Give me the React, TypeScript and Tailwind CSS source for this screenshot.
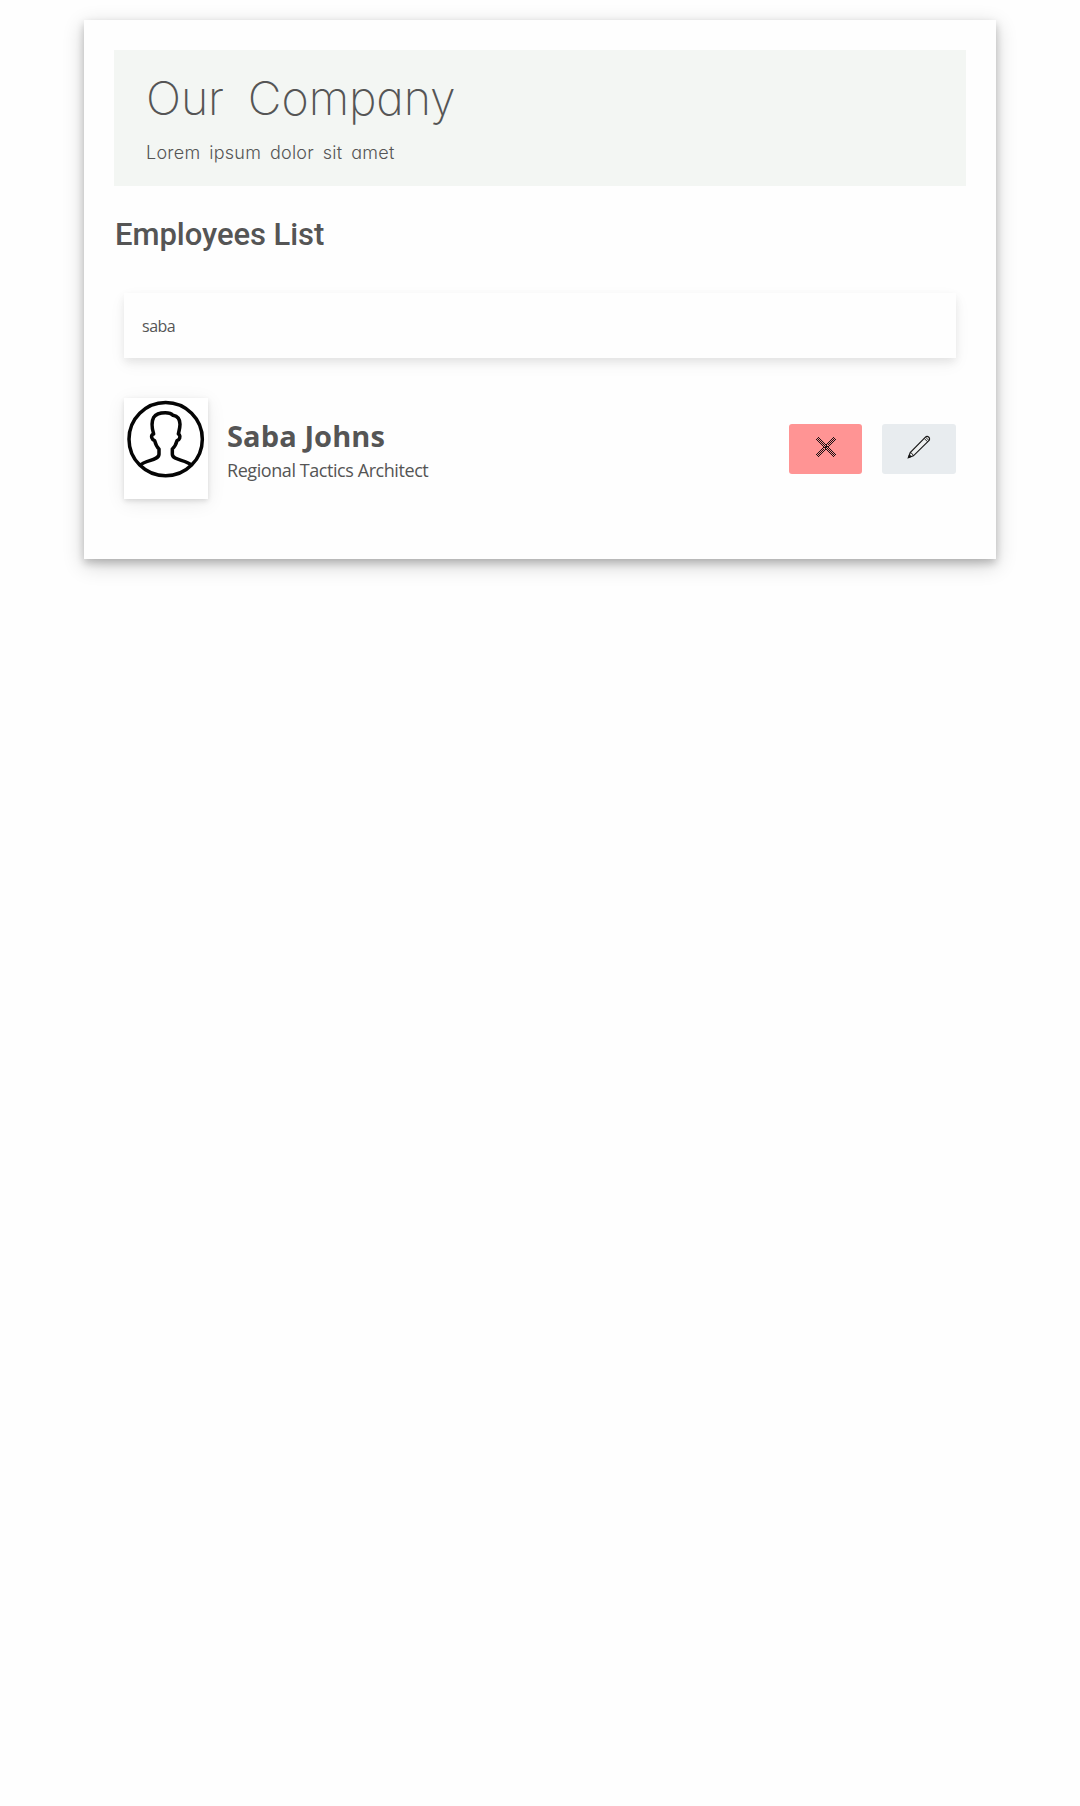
const crossPixels: string[] = [];
for (let y = 0; y < 20; y++) {
  for (let x = 0; x < 20; x++) {
    const u = 19 - x;
    const falling = Math.abs(x - y) <= 2 && (x + y) % 2 === 0 && x + y >= 2 && x + y <= 36;
    const rising = Math.abs(u - y) <= 2 && (u + y) % 2 === 0 && u + y >= 2 && u + y <= 36;
    const center = x >= 9 && x <= 10 && y >= 9 && y <= 10;
    const nearCenter = x >= 8 && x <= 11 && y >= 8 && y <= 11;
    if (center || falling || (rising && !nearCenter)) crossPixels.push(`M${x} ${y}h1v1h-1z`);
  }
}

function CrossIcon() {
  return (
    <svg width="20" height="20" viewBox="0 0 20 20" shapeRendering="crispEdges" aria-hidden="true">
      <path d={crossPixels.join("")} fill="#1c1214" />
    </svg>
  );
}

function PencilIcon() {
  return (
    <svg width="24" height="24" viewBox="0 0 24 24" fill="none" stroke="#161616" strokeWidth="1.15" aria-hidden="true">
      <path d="M1.5 22.5 3.2 17.6 18.2 2.4Q20 .6 21.8 2.2Q23.4 4 21.6 5.8L6.4 20.8Z" fill="#eff1f1" />
      <path d="M3.2 17.6Q5.5 18 6.4 20.8M17.2 3.4 20.6 6.8M18.6 2.2 21.8 5.4" strokeWidth=".9" />
      <path d="M1.5 22.5 2.4 20 4 21.6Z" fill="#111" />
    </svg>
  );
}

function Avatar() {
  return (
    <div className="h-[101px] w-[84px] bg-white shadow-[0_2px_5px_0_rgba(0,0,0,0.12),0_4px_18px_0_rgba(0,0,0,0.08)]">
      <svg className="block h-[101px] w-[84px]" viewBox="27 24 252 303" fill="none" stroke="#050505" strokeWidth="10.5" strokeLinejoin="round" aria-hidden="true">
        <circle cx="152" cy="147.5" r="110" />
        <path d="M76 225C91 210 131 211 132 193V177C124 170 121 160 119 152C110 149 107 138 113 133L116 132C110 112 110 93 116 82C123 71 136 68 151 68C162 68 169 70 174 76C190 79 195 89 195 103C195 114 192 123 190 132L193 134C197 140 194 149 186 152C183 164 180 170 172 177V193C172 211 212 209 229 225" />
      </svg>
    </div>
  );
}

export default function App() {
  return (
    <div className="min-h-screen bg-[#fefefe] pt-5 font-['Open_Sans','Noto_Sans',sans-serif] text-[#555]">
      <main className="mx-auto h-[539px] w-[912px] bg-[#fefefe] p-[30px] shadow-[0_4px_8px_0_rgba(0,0,0,0.2),0_6px_20px_0_rgba(0,0,0,0.19)]">
        <header className="h-[136px] bg-[#f3f6f3] px-8 pt-[17px] font-['Inter',sans-serif] [font-feature-settings:'cv11']">
          <h1 className="h-[62px] whitespace-nowrap text-[46.5px] leading-[62px] font-extralight tracking-[-0.1px] [word-spacing:11px]">Our Company</h1>
          <p className="mt-[10px] h-7 whitespace-nowrap text-[18px] leading-7 font-[350] tracking-[0.25px] [word-spacing:3.5px]">Lorem ipsum dolor sit amet</p>
        </header>
        <h2 className="mt-[30px] ml-px h-[36px] font-['Roboto',sans-serif] text-[31px] leading-[37px] font-medium tracking-[-0.05px]">Employees List</h2>
        <section className="px-[10px] pt-[41px]">
          <input
            className="block h-[65px] w-full bg-[#fefefe] px-[18px] text-[16px] tracking-[-0.5px] shadow-[0_4px_8px_0_rgba(0,0,0,0.07),0_6px_16px_0_rgba(0,0,0,0.05)] outline-none"
            defaultValue="saba"
            aria-label="Search employees"
          />
          <article className="mt-10 flex items-start">
            <Avatar />
            <div className="ml-[19px] pt-[18px]">
              <h3 className="h-[40px] whitespace-nowrap text-[29px] leading-[40px] font-bold tracking-[0.1px]">Saba Johns</h3>
              <p className="h-7 whitespace-nowrap text-[18px] leading-[29px] tracking-[-0.43px]">Regional Tactics Architect</p>
            </div>
            <div className="mt-[26px] ml-auto flex gap-5">
              <button className="flex h-[50px] w-[73px] justify-center rounded-[3px] bg-[#ff9494] pt-[13px]" aria-label="Delete"><CrossIcon /></button>
              <button className="flex h-[50px] w-[74px] justify-center rounded-[3px] bg-[#e8ecef] pt-[11px]" aria-label="Edit"><PencilIcon /></button>
            </div>
          </article>
        </section>
      </main>
    </div>
  );
}
